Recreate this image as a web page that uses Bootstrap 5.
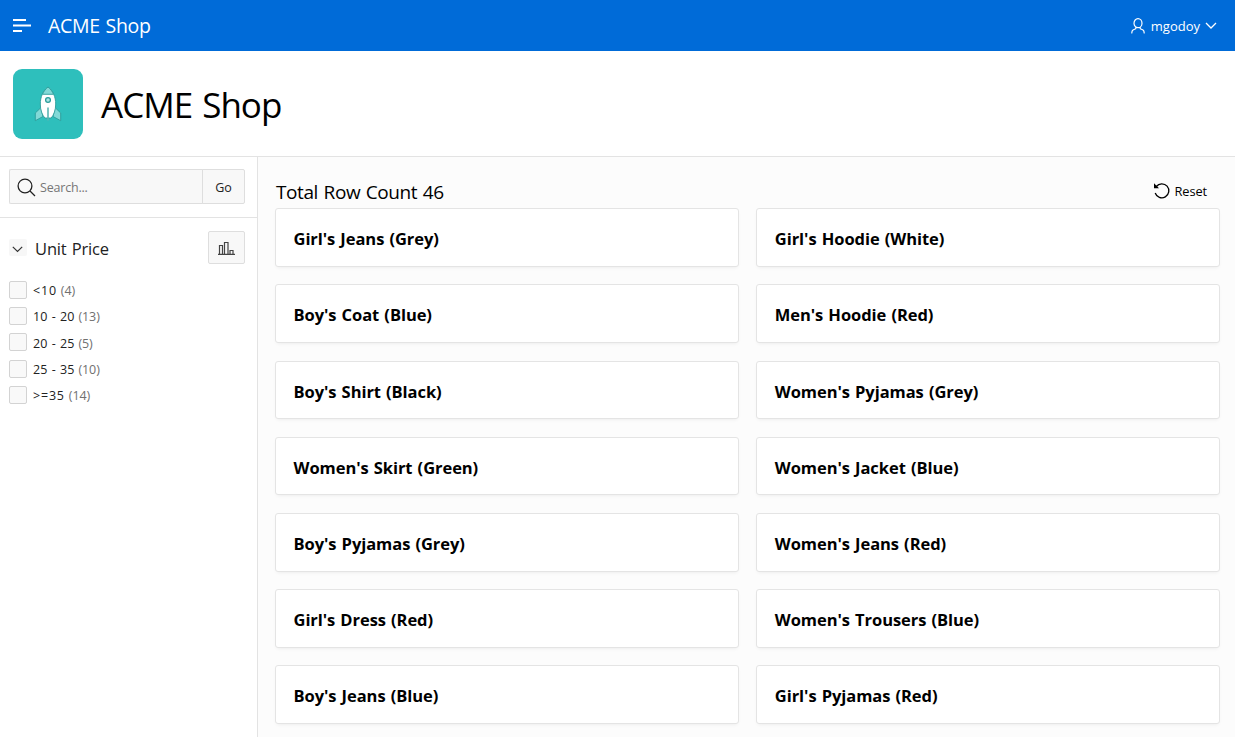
<!DOCTYPE html>
<html lang="en">
<head>
<meta charset="utf-8">
<meta name="viewport" content="width=device-width, initial-scale=1">
<title>ACME Shop</title>
<link href="https://cdn.jsdelivr.net/npm/bootstrap@5.3.0/dist/css/bootstrap.min.css" rel="stylesheet">
<style>
  body { font-family: "Open Sans", "Noto Sans", sans-serif; color: #000; height: 100vh; overflow: hidden; background: #fff; }
  svg { display: block; flex: none; }
  .topbar { height: 51px; background: #006bd8; color: #fff; padding: 0 18px 0 13px; }
  .brand { font-size: 19.5px; line-height: 26px; letter-spacing: -.3px; word-spacing: 1px; margin-left: 17px; }
  .user { font-size: 13px; letter-spacing: 0; padding-top: 1px; }
  .user span { margin: 0 5px 0 6px; padding-top: 1px; }
  .hero { height: 106px; border-bottom: 1px solid #e3e3e3; padding-left: 13px; }
  .app-icon { width: 70px; height: 70px; border-radius: 9px; background: #2ebfbc; }
  .hero h1 { font-size: 35px; letter-spacing: -1px; word-spacing: 2px; font-weight: 400; line-height: 48px; margin: 2px 0 0 18px; }
  .facets { width: 258px; border-right: 1px solid #e3e3e3; }
  .search { height: 61px; border-bottom: 1px solid #e3e3e3; padding: 12px 12px 0 9px; }
  .search .input-group { height: 35px; }
  .search .form-control, .search .btn, .search .input-group-text { font-size: 12.5px; background: #f8f8f8; border-color: #dedede; border-radius: 2px; padding: 0; height: 35px; }
  .search .input-group-text { border-right: 0; padding: 2px 5px 0 7px; }
  .search .form-control { border-left: 0; letter-spacing: -.2px; padding-top: 2px; }
  .search .form-control::placeholder { color: #767676; }
  .search .btn { width: 43px; color: #222; padding-top: 3px; }
  .facet-head { padding: 13px 12px 0 9px; height: 47px; }
  .toggle { width: 18px; height: 17px; background: #f7f7f7; border-radius: 2px; padding: 3px 1px 0 0; }
  .facet-head h2 { font-size: 16.5px; letter-spacing: -.15px; word-spacing: 1px; font-weight: 400; color: #222; margin: 6px 0 0 8px; }
  .chart-btn { width: 37px; height: 33px; background: #f8f8f8; border: 1px solid #dedede; border-radius: 2px; }
  .options { padding: 12px 0 0 9px; font-size: 12.5px; color: #222; }
  .option { height: 26.2px; }
  .option .form-check-input { width: 18px; height: 18px; margin: 0 6px 0 0; background-color: #f9f9f9; border-color: #d3d3d3; border-radius: 2px; }
  .option span { letter-spacing: .05px; word-spacing: 1px; padding-top: 3px; }
  .option .bound { letter-spacing: .8px; }
  .option .count { color: #707070; margin-left: 4px; letter-spacing: -.1px; }
  .results { background: #fcfcfc; padding: 19px 15px 0 17px; }
  .results-head { height: 32.3px; padding: 0 13px 0 1px; }
  .total { font-size: 19px; letter-spacing: -.4px; word-spacing: 1px; }
  .reset { font-size: 12.8px; margin-top: -2px; letter-spacing: -.1px; }
  .products { grid-template-columns: 1fr 1fr; grid-auto-rows: 58.6px; gap: 17.6px; }
  .product { border: 1px solid #e4e4e4; border-radius: 3px; box-shadow: 0 2px 4px -2px rgba(0,0,0,.09); padding: 3px 0 0 17.500px; justify-content: center; }
  .product h3 { font-size: 16.5px; font-weight: 700; margin: 0; letter-spacing: -.06px; word-spacing: .9px; }
</style>
</head>
<body class="d-flex flex-column">
<header class="topbar d-flex align-items-center flex-shrink-0">
  <svg width="18" height="14" viewBox="0 0 18 14" fill="#fff"><path d="M0 0h13v2H0zM0 5.500h18v2H0zM0 11h9v2H0z"/></svg>
  <span class="brand">ACME Shop</span>
  <div class="user d-flex align-items-center ms-auto">
    <svg width="14" height="17" viewBox="0 0 14 17" fill="none" stroke="#fff" stroke-width="1.2" stroke-linecap="round"><ellipse cx="7" cy="5.200" rx="4" ry="4.500"/><path d="M4.800 9.500v1.200L2 12Q.8 12.700.8 15M9.200 9.500v1.200L12 12q1.200.7 1.200 3"/></svg>
    <span>mgodoy</span>
    <svg width="12" height="8" viewBox="0 0 12 8" fill="none" stroke="#fff" stroke-width="1.3"><path d="M1 1l5 5 5-5"/></svg>
  </div>
</header>
<section class="hero d-flex align-items-center flex-shrink-0">
  <div class="app-icon d-flex align-items-center justify-content-center">
    <svg width="28" height="36" viewBox="0 0 28 36" stroke="#2b9d9b" stroke-width=".9" stroke-linejoin="round"><path d="M7 21.500L1.300 27v7.700l7.700-4.200zM21 21.500l5.700 5.500v7.700L19 30.500z" fill="#82d9d7"/><path d="M14 1C9 4.700 6.300 11 6.300 18c0 6 1.800 10.800 4.500 14h6.400c2.700-3.200 4.500-8 4.500-14C21.700 11 19 4.700 14 1z" fill="#fff"/><path d="M14 1C11.500 2.900 9.700 5.500 8.500 8.300h11C18.300 5.500 16.500 2.900 14 1z" fill="#82d9d7"/><circle cx="14" cy="14" r="2.400" fill="#abe5e4" stroke-width="1.300"/><path d="M14 21.500v13" stroke-width="1.600" stroke="#5ab5b3"/></svg>
  </div>
  <h1>ACME Shop</h1>
</section>
<div class="d-flex flex-grow-1">
  <aside class="facets flex-shrink-0">
    <div class="search">
      <div class="input-group flex-nowrap">
        <span class="input-group-text"><svg width="19" height="19" viewBox="0 0 19 19" fill="none" stroke="#222" stroke-width="1.300"><circle cx="8" cy="8" r="6.900"/><path d="M13 13l5 5"/></svg></span>
        <input class="form-control" type="text" placeholder="Search...">
        <button class="btn" type="button">Go</button>
      </div>
    </div>
    <div class="facet-head d-flex align-items-start">
      <span class="toggle d-flex align-items-center justify-content-center mt-2"><svg width="11" height="7" viewBox="0 0 11 7" fill="none" stroke="#333" stroke-width="1.200"><path d="M.8 .8l4.700 4.700L10.200.8"/></svg></span>
      <h2 class="lh-base">Unit Price</h2>
      <button class="chart-btn btn p-0 d-flex align-items-center justify-content-center ms-auto" type="button" aria-label="Chart"><svg width="17" height="14" viewBox="0 0 17 14" fill="none" stroke="#444" stroke-width="1.200"><path d="M0 13.400h17M1.500 13V4.500h3V13M6.500 13V1.500h3.500V13M12 13V9.500h3V13"/></svg></button>
    </div>
    <div class="options">
      <label class="option d-flex align-items-center"><input class="form-check-input" type="checkbox"><span class="bound">&lt;10</span><span class="count">(4)</span></label>
      <label class="option d-flex align-items-center"><input class="form-check-input" type="checkbox"><span>10 - 20</span><span class="count">(13)</span></label>
      <label class="option d-flex align-items-center"><input class="form-check-input" type="checkbox"><span>20 - 25</span><span class="count">(5)</span></label>
      <label class="option d-flex align-items-center"><input class="form-check-input" type="checkbox"><span>25 - 35</span><span class="count">(10)</span></label>
      <label class="option d-flex align-items-center"><input class="form-check-input" type="checkbox"><span class="bound">&gt;=35</span><span class="count">(14)</span></label>
    </div>
  </aside>
  <main class="results flex-grow-1">
    <div class="results-head d-flex align-items-center justify-content-between">
      <span class="total">Total Row Count 46</span>
      <span class="reset d-flex align-items-center"><svg class="me-1" width="18" height="18" viewBox="0 0 18 18" fill="none" stroke="#000" stroke-width="1.300"><path d="M3.300 4.500A7 7 0 1 1 2.200 11"/><path d="M1 1.200v5h5z" fill="#000" stroke="none"/></svg><span>Reset</span></span>
    </div>
    <div class="products d-grid">
      <div class="card product"><h3>Girl's Jeans (Grey)</h3></div>
      <div class="card product"><h3>Girl's Hoodie (White)</h3></div>
      <div class="card product"><h3>Boy's Coat (Blue)</h3></div>
      <div class="card product"><h3>Men's Hoodie (Red)</h3></div>
      <div class="card product"><h3>Boy's Shirt (Black)</h3></div>
      <div class="card product"><h3>Women's Pyjamas (Grey)</h3></div>
      <div class="card product"><h3>Women's Skirt (Green)</h3></div>
      <div class="card product"><h3>Women's Jacket (Blue)</h3></div>
      <div class="card product"><h3>Boy's Pyjamas (Grey)</h3></div>
      <div class="card product"><h3>Women's Jeans (Red)</h3></div>
      <div class="card product"><h3>Girl's Dress (Red)</h3></div>
      <div class="card product"><h3>Women's Trousers (Blue)</h3></div>
      <div class="card product"><h3>Boy's Jeans (Blue)</h3></div>
      <div class="card product"><h3>Girl's Pyjamas (Red)</h3></div>
    </div>
  </main>
</div>
<script src="https://cdn.jsdelivr.net/npm/bootstrap@5.3.0/dist/js/bootstrap.bundle.min.js"></script>
</body>
</html>
